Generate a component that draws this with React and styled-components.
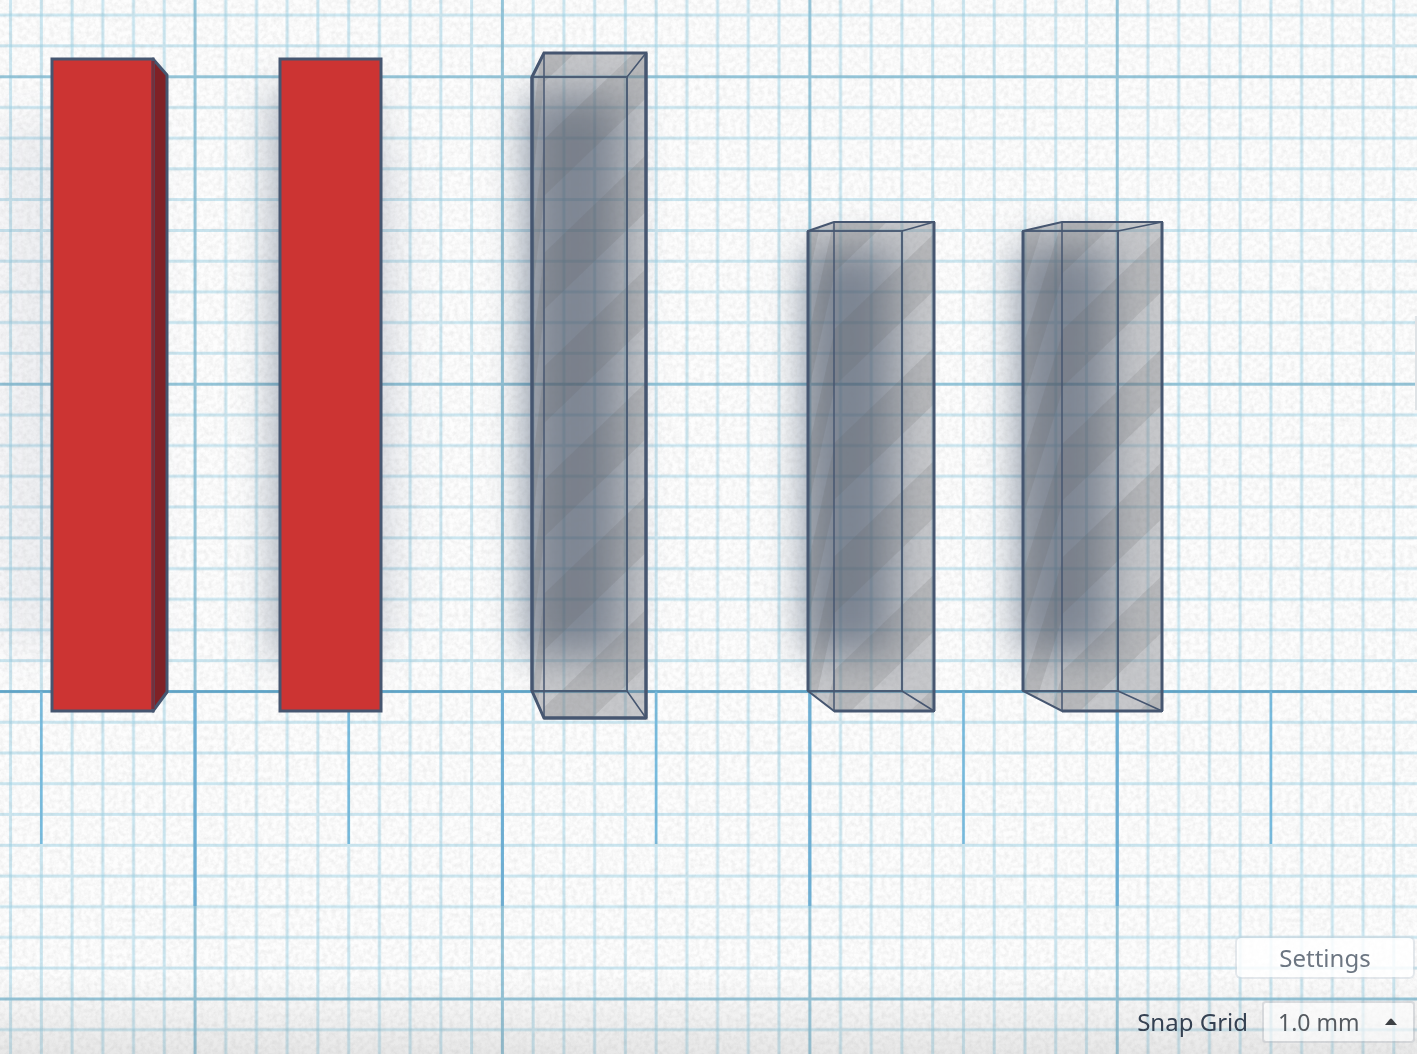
import React, { useId } from "react";
import styled, { createGlobalStyle } from "styled-components";

const GlobalStyle = createGlobalStyle`
  *, *::before, *::after { box-sizing: border-box; }
  body {
    margin: 0;
    background: #fafafa;
    font-family: "Noto Sans", "Open Sans", sans-serif;
  }
`;

const Workspace = styled.main`
  display: grid;
  grid-template: minmax(100vh, auto) / minmax(0, 1fr);
  overflow: hidden;
`;

const Plane = styled.svg`
  grid-area: 1 / 1;
  display: block;
  width: 100%;
  height: 100%;
`;

const GridLayer = styled.g`
  mix-blend-mode: multiply;
`;

const Overlay = styled.div`
  grid-area: 1 / 1;
  z-index: 1;
  display: flex;
  flex-direction: column;
  justify-content: flex-end;
  align-items: flex-end;
  gap: 22px;
  padding: 0 2px 11px 0;
  background: linear-gradient(to top, rgba(120, 120, 120, 0.16), rgba(120, 120, 120, 0) 80px);
`;

const PanelHandle = styled.button`
  position: absolute;
  top: 316px;
  right: 0;
  width: 2px;
  height: 94px;
  padding: 0;
  border: 0;
  background: #dfe3e6;
`;

const SettingsButton = styled.button`
  width: 180px;
  height: 43px;
  padding: 0;
  border: 2px solid rgba(205, 213, 221, 0.5);
  border-radius: 6px;
  background: rgba(255, 255, 255, 0.82);
  background-clip: padding-box;
  color: #6c7682;
  font: 400 24px/32px "Noto Sans", sans-serif;
`;

const SnapRow = styled.div`
  display: flex;
  align-items: center;
  gap: 14px;
`;

const SnapLabel = styled.label`
  color: #354152;
  font-size: 24px;
  line-height: 32px;
`;

const SelectBox = styled.div`
  display: grid;
  align-items: center;
  width: 153px;
  height: 42px;
`;

const SnapSelect = styled.select`
  grid-area: 1 / 1;
  appearance: none;
  width: 100%;
  height: 100%;
  margin: 0;
  padding: 0 0 0 14px;
  border: 2px solid rgba(180, 186, 192, 0.4);
  border-radius: 4px;
  background: rgba(255, 255, 255, 0.6);
  background-clip: padding-box;
  color: #555a60;
  font: 400 23px/32px "Noto Sans", sans-serif;
`;

const Caret = styled.svg`
  grid-area: 1 / 1;
  justify-self: end;
  margin-right: 18px;
  pointer-events: none;
`;

const CELL = 307.4;
const STEP = CELL / 10;
const ORIGIN = { x: 195, y: 691.5 };
const STRIPE = 56.8;
const EDGE = "#465670";

const minorSteps = [1, 2, 3, 4, 5, 6, 7, 8, 9];

function stripePath(x1, x2, yRight, slope) {
  let d = "";
  for (let k = -8; k < 8; k += 1) {
    const y = yRight + k * STRIPE * 2;
    const drop = (x2 - x1) * slope;
    d += `M${x2} ${y}V${y + STRIPE}L${x1} ${y + STRIPE + drop}V${y + drop}Z`;
  }
  return d;
}

function SolidBox({ left, right, side }) {
  return (
    <g stroke={EDGE} strokeWidth="3">
      {side && <path d={`M${right} 59L${side} 75V692L${right} 711Z`} fill="#7f2126" strokeLinejoin="round" />}
      <rect x={left} y="59" width={right - left} height="652" fill="#cc3433" />
      {side && <path d={`M${right} 61V709`} stroke="#75303c" strokeWidth="3" />}
    </g>
  );
}

function HoleBox({ baseLeft, baseRight, baseTop, left, right, top, bottom, stripeStart, sideSlope, heavy }) {
  const id = useId();
  const base = 691;
  const sideStart = stripeStart + (right - left);
  const outline = `M${baseLeft} ${baseTop}L${left} ${top}H${right}V${bottom}H${left}L${baseLeft} ${base}Z`;
  return (
    <g fill="none" stroke={EDGE}>
      <clipPath id={`${id}face`}>
        <rect x={left} y={top} width={right - left} height={bottom - top} />
      </clipPath>
      <clipPath id={`${id}side`}>
        <path d={`M${baseLeft} ${baseTop}L${left} ${top}V${bottom}L${baseLeft} ${base}Z`} />
      </clipPath>
      <path d={outline} fill="#7f8188" fillOpacity="0.43" stroke="none" />
      <g fill="#605c5c" fillOpacity="0.15" stroke="none">
        <path d={stripePath(left, right, stripeStart, 0.96)} clipPath={`url(#${id}face)`} />
        <path d={stripePath(baseLeft, left, sideStart, sideSlope)} clipPath={`url(#${id}side)`} />
      </g>
      <path d={`M${left} ${top}V${bottom}`} strokeWidth="2" strokeOpacity="0.75" />
      <path d={`M${baseLeft} ${baseTop}H${baseRight}V${base}H${baseLeft}`} strokeWidth="2" strokeOpacity="0.9" />
      <path d={`M${baseRight} ${baseTop}L${right} ${top}M${baseRight} ${base}L${right} ${bottom}`} strokeWidth="1.5" />
      <path d={outline} strokeWidth={heavy ? 3 : 2} />
      <path d={`M${baseLeft} ${baseTop}V${base}M${right} ${top}V${bottom}`} strokeWidth="3" />
      <path d={`M${left} ${bottom}H${right}`} strokeWidth="3" />
    </g>
  );
}

function Grid() {
  return (
    <GridLayer>
      <rect width="100%" height="100%" fill="url(#grid)" />
      <path d={`M0 ${ORIGIN.y}H4000`} stroke="#5fa6cb" strokeWidth="2.5" />
      {[0, 1, 2, 3].map((n) => (
        <path key={n} d={`M${ORIGIN.x + n * CELL} ${ORIGIN.y}V906`} stroke="#6eb2d8" strokeWidth="3" />
      ))}
      {[-1, 0, 1, 2, 3].map((n) => (
        <path key={n} d={`M${ORIGIN.x + (n + 0.5) * CELL} ${ORIGIN.y}V844`} stroke="#78bde0" strokeWidth="2.5" />
      ))}
    </GridLayer>
  );
}

function Scene() {
  return (
    <Plane role="img" aria-label="Workplane with two solid boxes and three hole boxes">
      <defs>
        <pattern id="grid" x={ORIGIN.x - STEP / 2} y={ORIGIN.y - STEP / 2} width={CELL} height={CELL} patternUnits="userSpaceOnUse">
          {minorSteps.map((n) => (
            <path
              key={n}
              d={`M${(n + 0.5) * STEP} 0V${CELL}M0 ${(n + 0.5) * STEP}H${CELL}`}
              stroke="#95cfe4"
              strokeOpacity="0.48"
              strokeWidth="3"
            />
          ))}
          <path d={`M${STEP / 2} 0V${CELL}M0 ${STEP / 2}H${CELL}`} stroke="#86bfd6" strokeOpacity="0.88" strokeWidth="3" />
        </pattern>
        <filter id="grain" x="0" y="0" width="100%" height="100%" colorInterpolationFilters="sRGB">
          <feTurbulence type="fractalNoise" baseFrequency="0.22" numOctaves="3" seed="4" />
          <feColorMatrix values="0 0 0 0 0.5  0 0 0 0 0.5  0 0 0 0 0.5  0.22 0 0 0 -0.075" />
        </filter>
        <filter id="soft" x="-100%" y="-20%" width="300%" height="140%" colorInterpolationFilters="sRGB">
          <feGaussianBlur stdDeviation="20" />
        </filter>
      </defs>
      <rect width="100%" height="100%" fill="#fdfdfd" />
      <g filter="url(#soft)" fill="#293f5e">
        <rect x="0" y="120" width="150" height="530" fillOpacity="0.07" />
        <rect x="276" y="90" width="92" height="570" fillOpacity="0.45" />
        <rect x="370" y="150" width="36" height="480" fillOpacity="0.07" />
        <rect x="528" y="96" width="94" height="560" fillOpacity="0.6" />
        <rect x="807" y="250" width="86" height="404" fillOpacity="0.62" />
        <rect x="1020" y="246" width="90" height="408" fillOpacity="0.6" />
      </g>
      <Grid />
      <rect width="100%" height="100%" filter="url(#grain)" />
      <SolidBox left={52} right={153} side={167} />
      <SolidBox left={280} right={381} />
      <HoleBox baseLeft={532} baseRight={627} baseTop={77} left={544} right={646} top={53} bottom={718} stripeStart={155} sideSlope={8} heavy />
      <HoleBox baseLeft={808} baseRight={902} baseTop={231} left={834} right={934} top={222} bottom={711} stripeStart={120} sideSlope={4.5} />
      <HoleBox baseLeft={1023} baseRight={1118} baseTop={231} left={1062} right={1162} top={222} bottom={711} stripeStart={121} sideSlope={3.2} />
    </Plane>
  );
}

export default function App() {
  return (
    <Workspace>
      <GlobalStyle />
      <Scene />
      <Overlay>
        <PanelHandle type="button" aria-label="Toggle panel" />
        <SettingsButton type="button">Settings</SettingsButton>
        <SnapRow>
          <SnapLabel htmlFor="snap-grid">Snap Grid</SnapLabel>
          <SelectBox>
            <SnapSelect id="snap-grid" defaultValue="1.0">
              <option value="1.0">1.0 mm</option>
            </SnapSelect>
            <Caret width="12" height="8" viewBox="0 0 12 8" aria-hidden="true">
              <path d="M0 7L5 1Q6 0 7 1L12 7Z" fill="#3c3f43" />
            </Caret>
          </SelectBox>
        </SnapRow>
      </Overlay>
    </Workspace>
  );
}
